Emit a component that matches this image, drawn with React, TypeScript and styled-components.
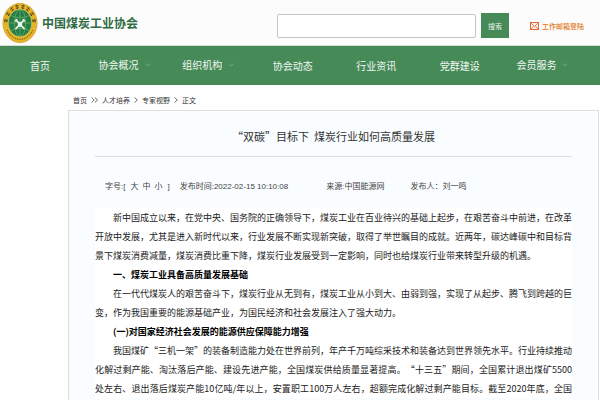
import React from "react";
import styled, { createGlobalStyle } from "styled-components";

const GlobalStyle = createGlobalStyle`
  * { box-sizing: border-box; }
  body {
    margin: 0;
    background: #fff;
    color: #333;
    font-family: "Noto Sans CJK SC", sans-serif;
    text-spacing-trim: space-all;
  }
  a { color: inherit; text-decoration: none; }
`;

const Page = styled.div`
  display: flex;
  flex-direction: column;
  height: 100vh;
  overflow: hidden;
`;

const Header = styled.header`
  display: flex;
  align-items: center;
  flex: none;
  height: 46px;
  padding: 0 16px 0 2px;
  background: #fcfcfc;
  border-bottom: 1px solid #d5ded7;
`;

const Brand = styled.a`
  display: flex;
  align-items: center;
  gap: 4px;
  margin-right: auto;
  color: #2f6b45;
  font-size: 12px;
  font-weight: 700;
  line-height: 18px;
`;

const Emblem = styled.svg`
  display: block;
  width: 36px;
  height: 42px;
`;

const Search = styled.form`
  display: flex;
  align-items: center;
  gap: 5px;
  margin: 6px 21px 0 0;
`;

const SearchInput = styled.input`
  width: 199px;
  height: 24px;
  padding: 0 6px;
  border: 1px solid #c6c6c6;
  border-radius: 2px;
  background: #fff;
  font: inherit;
  font-size: 9px;
  outline: none;
`;

const SearchButton = styled.button`
  width: 28px;
  height: 25px;
  padding: 0;
  border: 0;
  background: #468a58;
  color: #e6f2e8;
  font: inherit;
  font-size: 7px;
`;

const MailLink = styled.a`
  display: flex;
  align-items: center;
  gap: 3px;
  margin-top: 6px;
  color: #e07a1c;
  font-size: 7px;
  font-weight: 500;
  line-height: 12px;
`;

const Nav = styled.nav`
  display: grid;
  grid-template-columns: repeat(7, 1fr);
  flex: none;
  height: 39px;
  padding-right: 15px;
  background: #468a58;
`;

const NavItem = styled.a<{ $menu?: boolean }>`
  display: flex;
  align-items: center;
  gap: 6px;
  padding-left: ${(p) => (p.$menu ? "15px" : "22px")};
  padding-bottom: ${(p) => (p.$menu ? "2px" : "0")};
  color: #f2f8f3;
  font-size: 10px;
  line-height: 16px;
  white-space: nowrap;

  &:first-child { padding-left: 30px; }
`;

const Crumbs = styled.nav`
  display: flex;
  align-items: center;
  gap: 4px;
  flex: none;
  height: 25px;
  padding: 5px 0 0 73px;
  font-size: 7px;
  line-height: 12px;
`;

const Article = styled.article`
  flex: 1 0 auto;
  margin: 0 1px 0 68px;
  padding: 0 26px;
  border: 1px solid #dcdfdf;
  border-bottom: 0;
  background: #fafdff;
`;

const Title = styled.h1`
  margin: 0;
  padding: 16px 0 11px;
  border-bottom: 1px solid #dcdedc;
  color: #333;
  font-size: 11px;
  font-weight: 400;
  line-height: 18px;
  text-align: center;
`;

const Meta = styled.div`
  display: flex;
  align-items: center;
  height: 51px;
  padding: 9px 10px 0;
  color: #444;
  font-family: "Liberation Sans", "Noto Sans CJK SC", sans-serif;
  font-size: 8px;
  line-height: 14px;
  white-space: nowrap;
`;

const MetaItem = styled.span<{ $gap: number }>`
  display: flex;
  margin-right: ${(p) => p.$gap}px;
`;

const SizeButtons = styled.span`
  display: flex;
  margin: 0 3px;
`;

const SizeButton = styled.button`
  width: 12px;
  padding: 0;
  border: 0;
  background: none;
  color: inherit;
  font: inherit;
  text-align: center;
`;

const Body = styled.section`
  background: #fff;
  color: #222;
  font-size: 9px;
  line-height: 19px;
  text-align: justify;
`;

const Paragraph = styled.p<{ $continued?: boolean }>`
  margin: 0;
  text-indent: 2em;
  text-align-last: ${(p) => (p.$continued ? "justify" : "auto")};
`;

const Heading = styled.h2`
  margin: 0;
  color: #000;
  font-size: 9px;
  font-weight: 700;
  line-height: 19px;
  text-indent: 2em;
`;

const Chevron = () => (
  <svg width="6" height="4" viewBox="0 0 6 4" fill="none" stroke="#7fb08b" aria-hidden="true">
    <path d="M.5.6 3 3.1 5.5.6" strokeWidth=".8" />
  </svg>
);

const Single = () => (
  <svg width="4" height="6" viewBox="0 0 4 6" fill="none" stroke="#444" strokeWidth=".8" aria-hidden="true">
    <path d="M.5.4 3.3 3 .5 5.6" />
  </svg>
);

const Double = () => (
  <svg width="7" height="6" viewBox="0 0 7 6" fill="none" stroke="#444" strokeWidth=".8" aria-hidden="true">
    <path d="M.5.4 3.2 3 .5 5.6M3.8.4 6.5 3 3.8 5.6" />
  </svg>
);

const ringMarks = [-82, -57, -34, -12, 12, 34, 57, 82];

const Logo = () => (
  <Emblem viewBox="0 0 36 42" aria-hidden="true">
    <ellipse cx="18" cy="21" rx="17" ry="19.6" fill="#e9b526" stroke="#cf9a1d" strokeWidth=".8" />
    <g transform="translate(18 21) scale(1 1.16)" stroke="#4d4820" fill="none">
      {ringMarks.map((a) => (
        <g key={a} transform={`rotate(${a}) translate(0 -14.2)`}>
          <path d="M-1.7-.9H1.7M-1.5 1H1.5M0-2V2" strokeWidth=".75" />
        </g>
      ))}
      <path d="M-12.8 6A14.2 14.2 0 0 0 12.8 6" stroke="#8f7320" strokeWidth="1.4" strokeDasharray="1 .8" />
    </g>
    <ellipse cx="18" cy="21" rx="11.8" ry="13.8" fill="#237d48" stroke="#f0d667" strokeWidth=".6" />
    <g fill="none" stroke="#7fb66b" strokeWidth=".6">
      <ellipse cx="18" cy="21" rx="5.6" ry="13.4" />
      <path d="M18 7.5v27M6.4 21h23.2M8.5 13.5q9.5 4 19 0M8.5 28.5q9.5-4 19 0" />
    </g>
    <path d="m14 18 8.5 9M22 18l-8.5 9" stroke="#f4faf3" strokeWidth="1.8" />
    <path d="M13 19.6q.2-2 2.4-2.6M23 19.6q-.2-2-2.4-2.6" stroke="#f4faf3" strokeWidth="1.2" fill="none" />
    <path d="m18 19.6 2.4 2.9-2.4 3-2.4-3z" fill="#f4faf3" />
  </Emblem>
);

const Mail = () => (
  <svg width="9" height="8" viewBox="0 0 9 8" fill="none" stroke="#e5683a" aria-hidden="true">
    <rect x=".5" y=".5" width="8" height="7" fill="#fff4ec" />
    <path d="m1 1.2 3.5 3.2L8 1.2M1 7l2.6-3M8 7 5.4 4" strokeWidth=".8" />
  </svg>
);

const navItems = [
  { label: "首页" },
  { label: "协会概况", menu: true },
  { label: "组织机构", menu: true },
  { label: "协会动态" },
  { label: "行业资讯" },
  { label: "党群建设" },
  { label: "会员服务", menu: true },
];

export default function App() {
  return (
    <Page lang="zh-CN">
      <GlobalStyle />
      <Header>
        <Brand href="#"><Logo />中国煤炭工业协会</Brand>
        <Search onSubmit={(e) => e.preventDefault()}>
          <SearchInput type="text" aria-label="搜索" />
          <SearchButton type="submit">搜索</SearchButton>
        </Search>
        <MailLink href="#"><Mail />工作邮箱登陆</MailLink>
      </Header>
      <Nav>
        {navItems.map((item) => (
          <NavItem key={item.label} href="#" $menu={item.menu}>
            {item.label}
            {item.menu && <Chevron />}
          </NavItem>
        ))}
      </Nav>
      <Crumbs>
        <a href="#">首页</a><Double />
        <a href="#">人才培养</a><Single />
        <a href="#">专家视野</a><Single />
        <span>正文</span>
      </Crumbs>
      <Article>
        <Title>“双碳”目标下{"\u00a0 "}煤炭行业如何高质量发展</Title>
        <Meta>
          <MetaItem $gap={10}>
            字号:[
            <SizeButtons>
              <SizeButton type="button">大</SizeButton>
              <SizeButton type="button">中</SizeButton>
              <SizeButton type="button">小</SizeButton>
            </SizeButtons>
            ]
          </MetaItem>
          <MetaItem $gap={38}>发布时间:2022-02-15 10:10:08</MetaItem>
          <MetaItem $gap={26}>来源:中国能源网</MetaItem>
          <MetaItem $gap={0}>发布人：刘一鸣</MetaItem>
        </Meta>
        <Body>
          <Paragraph>
            新中国成立以来，在党中央、国务院的正确领导下，煤炭工业在百业待兴的基础上起步，在艰苦奋斗中前进，在改革开放中发展，尤其是进入新时代以来，行业发展不断实现新突破，取得了举世瞩目的成就。近两年，碳达峰碳中和目标背景下煤炭消费减量，煤炭消费比重下降，煤炭行业发展受到一定影响，同时也给煤炭行业带来转型升级的机遇。
          </Paragraph>
          <Heading>一、煤炭工业具备高质量发展基础</Heading>
          <Paragraph>
            在一代代煤炭人的艰苦奋斗下，煤炭行业从无到有，煤炭工业从小到大、由弱到强，实现了从起步、腾飞到跨越的巨变，作为我国重要的能源基础产业，为国民经济和社会发展注入了强大动力。
          </Paragraph>
          <Heading>(一)对国家经济社会发展的能源供应保障能力增强</Heading>
          <Paragraph $continued>
            我国煤矿“三机一架”的装备制造能力处在世界前列，年产千万吨综采技术和装备达到世界领先水平。行业持续推动化解过剩产能、淘汰落后产能、建设先进产能，全国煤炭供给质量显著提高。“十三五”期间，全国累计退出煤矿5500处左右、退出落后煤炭产能10亿吨/年以上，安置职工100万人左右，超额完成化解过剩产能目标。截至2020年底，全国
          </Paragraph>
        </Body>
      </Article>
    </Page>
  );
}
